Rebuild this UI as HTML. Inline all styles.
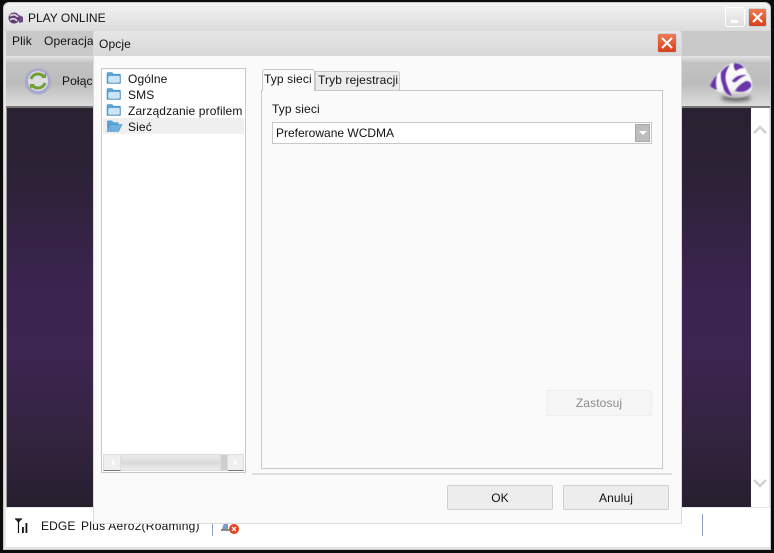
<!DOCTYPE html>
<html><head><meta charset="utf-8"><style>
html,body{margin:0;padding:0}
body{width:774px;height:553px;overflow:hidden;position:relative;background:#0c0c0c;font-family:"Liberation Sans",sans-serif;font-size:12px;color:#111}
.a{position:absolute;box-sizing:border-box}
.t{position:absolute;white-space:nowrap;line-height:14px;letter-spacing:.12px}
.x{background:linear-gradient(#ee7a50,#d8401a);border:1px solid #fff;outline:1px solid #c9d4dc;outline-offset:-1px}
</style></head><body>
<svg width="0" height="0" style="position:absolute"><defs>
<symbol id="f" viewBox="0 0 16 14"><path d="M1 4V2.5Q1 1.5 2 1.5H6L7.5 3.2H13.5Q14.5 3.2 14.5 4.2V11.5Q14.5 12.5 13.5 12.5H2Q1 12.5 1 11.5Z" fill="#5aa3d6" stroke="#4a90c4" stroke-width=".6"/><rect x="2.3" y="5" width="11.4" height="6.6" rx="1.2" fill="#cfe5f5"/></symbol>
</defs></svg>

<!-- main window -->
<div class="a" style="left:3px;top:2px;width:768px;height:548px;background:#e6e6e6;border:1px solid #c8c8c8;border-radius:6px 6px 0 0"></div>
<div class="a" style="left:4px;top:3px;width:766px;height:28px;background:linear-gradient(#f2f2f2,#dcdcdc);border-radius:6px 6px 0 0"></div>
<svg class="a" style="left:7px;top:11px" width="17" height="14" viewBox="0 0 17 14"><ellipse cx="7" cy="7" rx="5.5" ry="5.5" fill="#5c3a72"/><path d="M3 5Q7 2 11 6M3 9Q7 6 10 10" stroke="#d8cce0" stroke-width="1.8" fill="none"/><path d="M12 4L16 6V11L12 12Z" fill="#6b4a80"/></svg>
<div class="t" style="left:28px;top:11px;letter-spacing:0">PLAY ONLINE</div>
<div class="a" style="left:725px;top:7px;width:20px;height:20px;background:linear-gradient(#f2f2f2,#dedede);border:1px solid #fff;border-radius:3px"><div class="a" style="left:5px;top:12px;width:7px;height:3px;background:#fff"></div></div>
<div class="a x" style="left:748px;top:8px;width:19px;height:19px;border-radius:2px"><svg class="a" style="left:2px;top:2px" width="13" height="13"><path d="M2 2L11 11M11 2L2 11" stroke="#fff" stroke-width="2.2"/></svg></div>
<div class="a" style="left:6px;top:31px;width:764px;height:25px;background:#c9c9c9"></div>
<div class="t" style="left:12px;top:34px">Plik</div>
<div class="t" style="left:44px;top:34px">Operacja</div>
<div class="a" style="left:6px;top:56px;width:764px;height:50px;background:linear-gradient(#e4e4e4 0,#c2c2c2 14%,#bcbcbc 55%,#dcdcdc 100%)"></div>
<div class="a" style="left:6px;top:106px;width:764px;height:2px;background:#777"></div>
<svg class="a" style="left:24px;top:67px" width="28" height="28" viewBox="0 0 28 28"><circle cx="14" cy="14.5" r="13" fill="#a9a7cf" filter="blur(.5px)"/><circle cx="14" cy="14" r="10" fill="#dcdce2"/><path d="M7 12Q9 7 14 7Q18 7 20 10" stroke="#6fa032" stroke-width="3" fill="none"/><path d="M21 16Q19 21 14 21Q10 21 8 18" stroke="#6fa032" stroke-width="3" fill="none"/><path d="M17 11H22V6ZM11 17H6V22Z" fill="#6fa032"/></svg>
<div class="t" style="left:62px;top:74px">Połąc</div>
<svg class="a" style="left:708px;top:60px" width="48" height="44" viewBox="0 0 48 44"><defs><filter id="b" x="-20%" y="-20%" width="140%" height="140%"><feGaussianBlur stdDeviation=".6"/></filter><filter id="s" x="-30%" y="-80%" width="160%" height="260%"><feGaussianBlur stdDeviation="2"/></filter><linearGradient id="w" x1="0" y1="0" x2="0" y2="1"><stop offset="0" stop-color="#fff"/><stop offset=".75" stop-color="#f4f4f4"/><stop offset="1" stop-color="#b0b0b0"/></linearGradient></defs><ellipse cx="28" cy="38" rx="15" ry="3.5" fill="#666" filter="url(#s)"/><path d="M2 26Q5 18 13 11Q20 3 28 3Q36 4 39 12Q45 19 44 28Q42 38 30 38Q20 39 14 34Q7 31 2 26Z" fill="url(#w)" filter="url(#b)"/><g filter="url(#b)" fill="#6a35a8"><path d="M2 26Q4 20 9 15Q7 23 9 30Q5 29 2 26Z"/><path d="M13 12Q18 6 22 5Q16 13 18 22Q20 29 24 36Q16 34 15 26Q12 19 13 12Z"/><path d="M26 3Q33 3 36 8Q31 8 28 11Q25 8 26 3Z"/><path d="M24 21Q29 14 39 15Q33 17 30 20Q26 24 24 21Z"/><path d="M27 31Q30 25 38 21Q44 21 43 27Q37 34 27 31Z"/></g></svg>
<div class="a" style="left:7px;top:108px;width:745px;height:399px;background:linear-gradient(#2a2131 0,#2c2235 15%,#3b2450 45%,#3c2550 62%,#33243f 82%,#271f2e 100%)"></div>
<div class="a" style="left:6px;top:108px;width:1px;height:399px;background:#999"></div>
<div class="a" style="left:751px;top:108px;width:18px;height:399px;background:#fff"></div>
<svg class="a" style="left:752px;top:122px" width="16" height="380"><path d="M2 11L8 5L14 11" stroke="#d0d0d0" stroke-width="2.4" fill="none"/><path d="M2 358L8 364L14 358" stroke="#d0d0d0" stroke-width="2.4" fill="none"/></svg>
<div class="a" style="left:6px;top:507px;width:764px;height:40px;background:#fff;border-top:1px solid #e8e8e8"></div>
<svg class="a" style="left:14px;top:518px" width="14" height="16"><path d="M1 1H8M4.5 1V15M2 1L4.5 4L7 1" stroke="#111" stroke-width="1.2" fill="none"/><rect x="8" y="9" width="1.8" height="6" fill="#111" /><rect x="11.5" y="5" width="1.8" height="10" fill="#111"/></svg>
<div class="t" style="left:41px;top:519px">EDGE</div>
<div class="t" style="left:81px;top:519px;letter-spacing:.25px">Plus Aero2(Roaming)</div>
<div class="a" style="left:212px;top:514px;width:1px;height:22px;background:#8da0c8"></div>
<div class="a" style="left:702px;top:514px;width:1px;height:22px;background:#8da0c8"></div>
<svg class="a" style="left:220px;top:521px" width="20" height="14"><path d="M2 8L4 2H8V8Z" fill="#7c9cc0"/><rect x="1" y="8" width="8" height="2" fill="#888"/><circle cx="14" cy="8" r="5" fill="#e8401c"/><path d="M12 6L16 10M16 6L12 10" stroke="#fff" stroke-width="1.3"/></svg>

<!-- dialog -->
<div class="a" style="left:93px;top:30px;width:589px;height:494px;background:#fafafa;border:1px solid #dcdcdc;border-radius:4px 4px 0 0"></div>
<div class="a" style="left:94px;top:31px;width:587px;height:25px;background:linear-gradient(#e6e6e6,#d8d8d8);border-radius:4px 4px 0 0"></div>
<div class="t" style="left:99px;top:37px">Opcje</div>
<div class="a x" style="left:657px;top:33px;width:20px;height:20px;border-radius:2px"><svg class="a" style="left:2px;top:2px" width="14" height="14"><path d="M2 2L12 12M12 2L2 12" stroke="#fff" stroke-width="2"/></svg></div>

<!-- tree -->
<div class="a" style="left:101px;top:68px;width:145px;height:405px;background:#fff;border:1px solid #c8c8c8"></div>
<div class="a" style="left:103px;top:118px;width:141px;height:16px;background:#efefef"></div>
<svg class="a" style="left:106px;top:71px" width="16" height="14"><use href="#f"/></svg>
<svg class="a" style="left:106px;top:87px" width="16" height="14"><use href="#f"/></svg>
<svg class="a" style="left:106px;top:103px" width="16" height="14"><use href="#f"/></svg>
<svg class="a" style="left:106px;top:119px" width="17" height="14"><path d="M1 11V2.5Q1 1.5 2 1.5H6L7.5 3.2H12.5V5.5H5L1 11Z" fill="#5aa3d6"/><path d="M1 12.5L4.5 5.5H16L12.5 12.5Z" fill="#6fb0dd" stroke="#4a90c4" stroke-width=".6"/></svg>
<div class="t" style="left:128px;top:72px">Ogólne</div>
<div class="t" style="left:128px;top:88px">SMS</div>
<div class="t" style="left:128px;top:104px">Zarządzanie profilem</div>
<div class="t" style="left:128px;top:120px">Sieć</div>
<!-- tree scrollbar -->
<div class="a" style="left:103px;top:454px;width:141px;height:17px;background:linear-gradient(#ececec,#dadada 50%,#ececec);border:1px solid #dcdcdc"></div>
<div class="a" style="left:103px;top:454px;width:18px;height:17px;background:#efefef;border:1px solid #ddd;border-bottom:1px solid #777"></div>
<div class="a" style="left:227px;top:454px;width:17px;height:17px;background:#efefef;border:1px solid #ddd;border-bottom:1px solid #777"></div>
<div class="a" style="left:220px;top:454px;width:8px;height:17px;background:#cfcfcf;border:1px solid #ddd"></div>
<svg class="a" style="left:108px;top:458px" width="130" height="9"><path d="M6 1L3 4.5L6 8Z" fill="#fff"/><path d="M126 1L129 4.5L126 8Z" fill="#fff"/></svg>

<!-- tabs -->
<div class="a" style="left:261px;top:90px;width:402px;height:379px;border:1px solid #c8c8c8"></div>
<div class="a" style="left:262px;top:69px;width:53px;height:22px;background:#fafafa;border:1px solid #c8c8c8;border-bottom:0;border-radius:3px 3px 0 0"></div>
<div class="a" style="left:315px;top:71px;width:85px;height:19px;background:#ececec;border:1px solid #c8c8c8;border-bottom:0;border-radius:0 3px 0 0"></div>
<div class="t" style="left:264px;top:72px">Typ sieci</div>
<div class="t" style="left:318px;top:73px">Tryb rejestracji</div>
<div class="t" style="left:272px;top:102px">Typ sieci</div>
<div class="a" style="left:272px;top:122px;width:380px;height:22px;background:#fff;border:1px solid #c8c8c8"></div>
<div class="t" style="left:276px;top:126px;letter-spacing:0">Preferowane WCDMA</div>
<div class="a" style="left:635px;top:124px;width:15px;height:18px;background:#bdbdbd;border:1px solid #a8a8a8"><svg class="a" style="left:2px;top:5px" width="10" height="6"><path d="M1 1H9L5 5Z" fill="#fff"/></svg></div>
<div class="a" style="left:546px;top:390px;width:106px;height:26px;background:#f6f6f6;border:1px solid #eeeeee"></div>
<div class="t" style="left:546px;top:396px;width:106px;text-align:center;color:#8a8a8a">Zastosuj</div>
<div class="a" style="left:252px;top:473px;width:420px;height:2px;background:#dedede"></div>
<div class="a" style="left:447px;top:485px;width:106px;height:25px;background:#ededed;border:1px solid #cfcfcf;border-radius:2px"></div>
<div class="t" style="left:447px;top:491px;width:106px;text-align:center">OK</div>
<div class="a" style="left:563px;top:485px;width:106px;height:25px;background:#ededed;border:1px solid #cfcfcf;border-radius:2px"></div>
<div class="t" style="left:563px;top:491px;width:106px;text-align:center">Anuluj</div>
</body></html>
